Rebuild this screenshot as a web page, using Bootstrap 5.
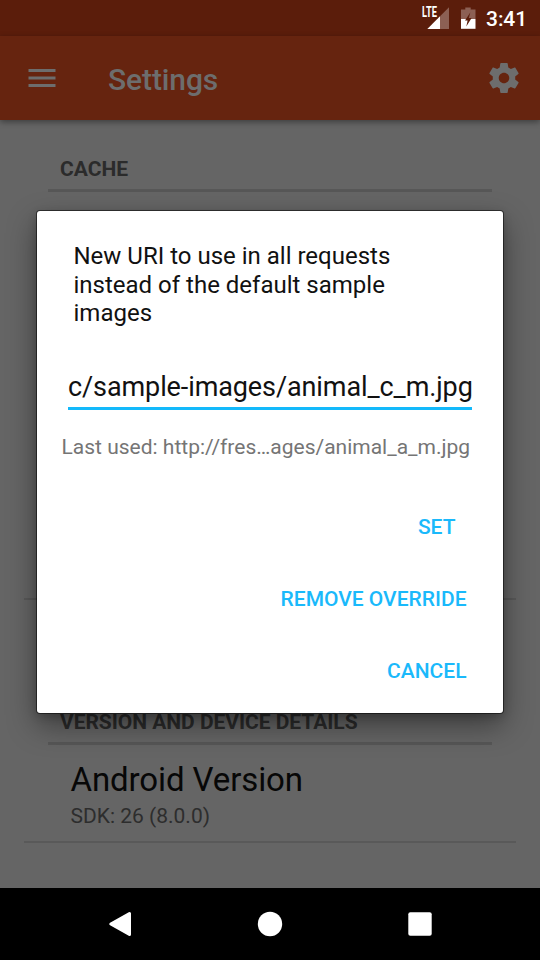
<!DOCTYPE html>
<html lang="en">
<head>
<meta charset="utf-8">
<meta name="viewport" content="width=device-width, initial-scale=1">
<title>Settings</title>
<link href="https://cdn.jsdelivr.net/npm/bootstrap@5.3.0/dist/css/bootstrap.min.css" rel="stylesheet">
<style>
body{font-family:Roboto,"Liberation Sans",sans-serif;background:#656565;height:960px;width:540px;overflow:hidden;line-height:1.17}
.status{height:36px;background:#5b1d0b;color:#fff;padding-right:13px}
.clock{font-size:21px;font-weight:500;line-height:38px;letter-spacing:-.1px}
.appbar{height:84px;background:#66240f;color:#6d6d6d;box-shadow:0 2px 6px rgba(0,0,0,.4);padding:0 18px 0 24px}
.appbar h1{font-size:30px;font-weight:500;margin:3px 0 0 48px;line-height:36px;letter-spacing:-.1px}
.section-title{font-size:21px;font-weight:700;color:#2b2b2b;margin:0 48px;padding:1px 12px 0;border-bottom:3px solid #575757;line-height:25px}
.section-cache{margin-top:36px;height:36px}
.entry{margin:0 24px;padding-left:46.5px;border-bottom:2px solid #595959;color:#070707}
.entry-name{font-size:33px;line-height:39px;letter-spacing:-.1px}
.entry-info{font-size:21px;line-height:25px;color:#2d2d2d;margin-top:5px}
.entry-cache{height:408px;padding-top:15px}
.section-version{margin-top:109px;height:36px;letter-spacing:-.04px}
.entry-version{height:98px;padding-top:15px}
.navbuttons{height:72px;background:#000;padding:0 90px}
.dialog-box{left:37px;top:211px;width:466px;height:502px;background:#fff;border-radius:3px;box-shadow:0 0 0 1px rgba(0,0,0,.5),0 12px 30px rgba(0,0,0,.42),0 3px 10px rgba(0,0,0,.2)}
.dialog-box h2{font-size:24px;font-weight:400;line-height:28.5px;color:#111;margin:31px 60px 0 36.5px}
.uri{font-size:27px;line-height:32px;letter-spacing:-.1px;color:#111;margin:43px 31px 0 31px;height:39px;border-bottom:3px solid #13b9fb}
.last-used{font-size:21px;line-height:25px;color:#757575;margin:25px 0 0 24.5px}
.actions{padding:0 36.5px 6px 0}
.flat{font-size:21px;font-weight:500;color:#1ab9fb;line-height:24px;padding:24px 0;height:72px;border:0;background:none}
.flat-narrow{margin-right:11px}
</style>
<script src="https://cdn.jsdelivr.net/npm/bootstrap@5.3.0/dist/js/bootstrap.bundle.min.js"></script>
</head>
<body class="d-flex flex-column position-relative">
<div class="status d-flex justify-content-end flex-shrink-0">
  <svg width="66" height="36" viewBox="0 0 66 36">
    <path d="M29 7.300V29H20V16.200z" fill="#8c6054"/>
    <path d="M20 16.200V29H7.300z" fill="#fff"/>
    <rect x="0" y="5" width="17.500" height="13.500" fill="#5b1d0b"/>
    <text x="2" y="17.200" font-size="14" font-weight="700" textLength="15" lengthAdjust="spacingAndGlyphs" fill="#fff">LTE</text>
    <path d="M45.300 7.500h5.400v2H55.500V19H41V9.500H45.300z" fill="#8c6054"/>
    <path d="M41 19H55.500V28.800H41z" fill="#fff"/>
    <path d="M50.300 12.500L45 20.500h2.600L46.300 26.500L51.600 18H48.800z" fill="#5b1d0b"/>
  </svg>
  <span class="clock">3:41</span>
</div>
<header class="appbar d-flex align-items-center flex-shrink-0">
  <svg width="36" height="36" viewBox="0 0 24 24" fill="currentColor"><path d="M3 18h18v-2H3v2zm0-5h18v-2H3v2zm0-7v2h18V6H3z"/></svg>
  <h1>Settings</h1>
  <svg class="ms-auto" width="36" height="36" viewBox="0 0 24 24" fill="currentColor"><path d="M19.430 12.980c.04-.32.07-.64.07-.98s-.03-.66-.07-.98l2.110-1.650c.19-.15.24-.42.12-.64l-2-3.460c-.12-.22-.39-.3-.61-.22l-2.490 1c-.52-.4-1.080-.73-1.690-.98l-.38-2.650C14.460 2.180 14.250 2 14 2h-4c-.25 0-.46.18-.49.42l-.38 2.650c-.61.25-1.170.59-1.690.98l-2.490-1c-.23-.09-.49 0-.61.22l-2 3.460c-.13.22-.07.49.12.64l2.110 1.650c-.04.32-.07.65-.07.98s.03.66.07.98l-2.110 1.650c-.19.15-.24.42-.12.64l2 3.460c.12.22.39.3.61.22l2.490-1c.52.4 1.080.73 1.690.98l.38 2.650c.03.24.24.42.49.42h4c.25 0 .46-.18.49-.42l.38-2.650c.61-.25 1.170-.59 1.690-.98l2.490 1c.23.09.49 0 .61-.22l2-3.460c.12-.22.07-.49-.12-.64l-2.110-1.650zM12 15.500c-1.930 0-3.500-1.570-3.500-3.500s1.570-3.500 3.500-3.500 3.500 1.570 3.500 3.500-1.570 3.500-3.500 3.500z"/></svg>
</header>
<main class="flex-grow-1 overflow-hidden">
  <div class="section-title section-cache">CACHE</div>
  <div class="entry entry-cache"></div>
  <div class="section-title section-version">VERSION AND DEVICE DETAILS</div>
  <div class="entry entry-version">
    <div class="entry-name">Android Version</div>
    <div class="entry-info">SDK: 26 (8.0.0)</div>
  </div>
</main>
<nav class="navbuttons d-flex justify-content-between align-items-center flex-shrink-0">
  <svg width="60" height="60" viewBox="0 0 60 60" fill="#fff" stroke="#fff" stroke-width="3" stroke-linejoin="round"><path d="M20.800 30L39.500 19.500V40.500z"/></svg>
  <svg width="60" height="60" viewBox="0 0 60 60" fill="#fff"><circle cx="30" cy="30" r="12.200"/></svg>
  <svg width="60" height="60" viewBox="0 0 60 60" fill="#fff"><rect x="18.300" y="18.300" width="23.400" height="23.400" rx="2"/></svg>
</nav>
<section class="dialog-box position-absolute d-flex flex-column" role="dialog">
  <h2>New URI to use in all requests<br>instead of the default sample<br>images</h2>
  <div class="uri text-nowrap">c/sample-images/animal_c_m.jpg</div>
  <div class="last-used text-nowrap">Last used: http://fres…ages/animal_a_m.jpg</div>
  <div class="actions d-flex flex-column align-items-end mt-auto">
    <button class="flat flat-narrow">SET</button>
    <button class="flat">REMOVE OVERRIDE</button>
    <button class="flat">CANCEL</button>
  </div>
</section>
</body>
</html>
